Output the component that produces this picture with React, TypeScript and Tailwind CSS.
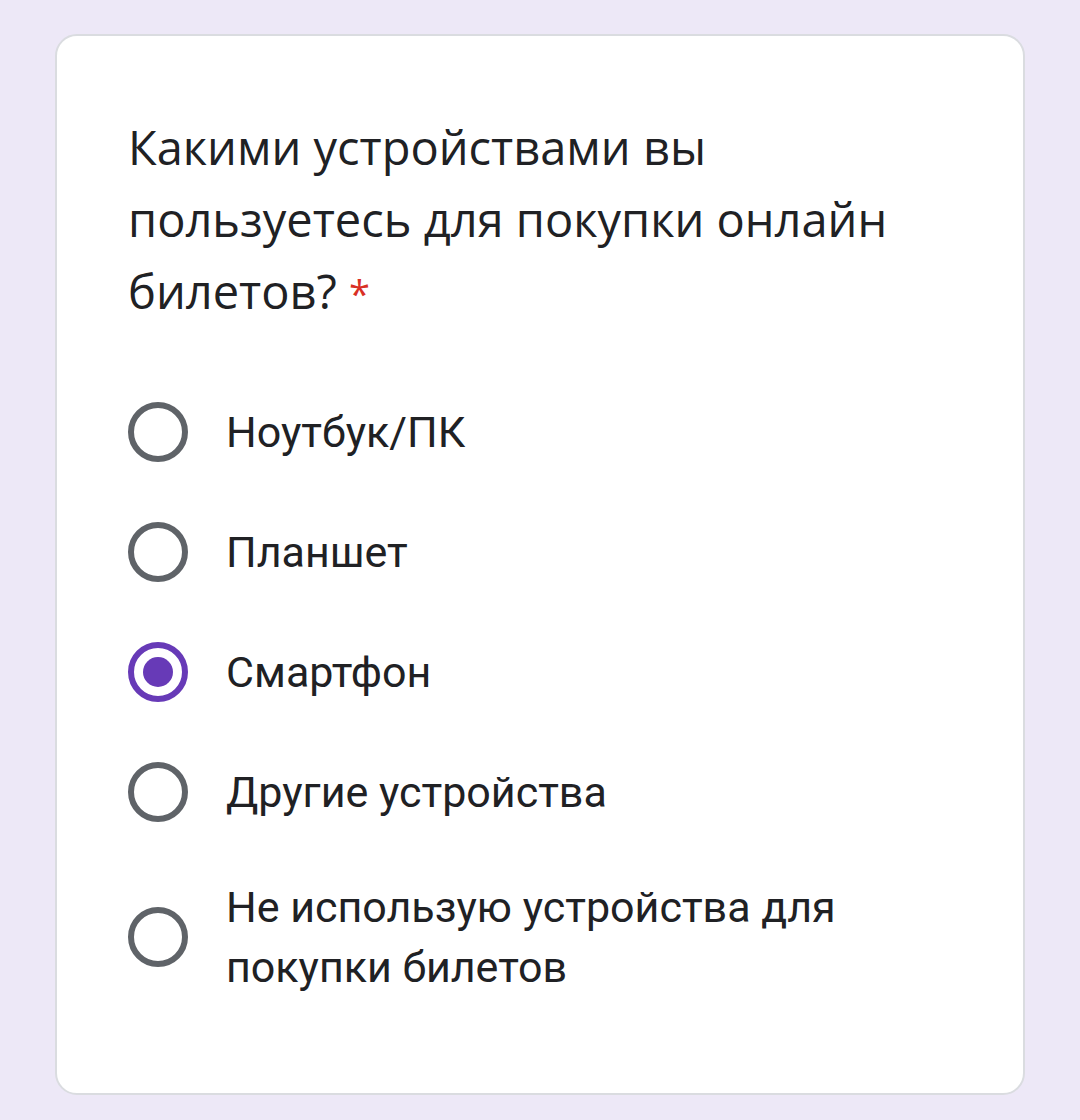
import React from "react";

const options = [
  { label: "Ноутбук/ПК", checked: false },
  { label: "Планшет", checked: false },
  { label: "Смартфон", checked: true },
  { label: "Другие устройства", checked: false },
  { label: "Не использую устройства для покупки билетов", checked: false },
];

function Radio({ checked }: { checked: boolean }) {
  if (checked) {
    return (
      <div className="w-[60px] h-[60px] shrink-0 rounded-full border-[6px] border-[#673ab7] flex items-center justify-center">
        <div className="w-[30px] h-[30px] rounded-full bg-[#673ab7]" />
      </div>
    );
  }
  return <div className="w-[60px] h-[60px] shrink-0 rounded-full border-[6px] border-[#5f6368]" />;
}

export default function App() {
  return (
    <div className="w-[1080px] h-[1120px] bg-[#ede8f7] pt-[34px] px-[55px]">
      <div className="bg-white border-2 border-[#dadce0] rounded-[22px] pl-[71px] pr-[60px] pt-[75px] pb-[66px]">
        <div
          className="text-[47px] leading-[72px] text-[#202124]"
          style={{ fontFamily: "'Open Sans', 'Noto Sans', sans-serif" }}
        >
          Какими устройствами вы
          <br />
          пользуетесь для покупки онлайн
          <br />
          билетов?{" "}
          <span className="text-[38px] align-top text-[#d93025] relative top-[2px]">*</span>
        </div>
        <div className="mt-[45px] flex flex-col" style={{ fontFamily: "Roboto, 'Noto Sans', sans-serif" }}>
          {options.map((o, i) => (
            <div
              key={i}
              className={`flex items-center gap-[38px] ${i === options.length - 1 ? "pt-[25px] pb-[30px]" : "py-[30px]"}`}
            >
              <Radio checked={o.checked} />
              <div className="text-[43px] leading-[60px] text-[#202124] max-w-[640px]">{o.label}</div>
            </div>
          ))}
        </div>
      </div>
    </div>
  );
}
